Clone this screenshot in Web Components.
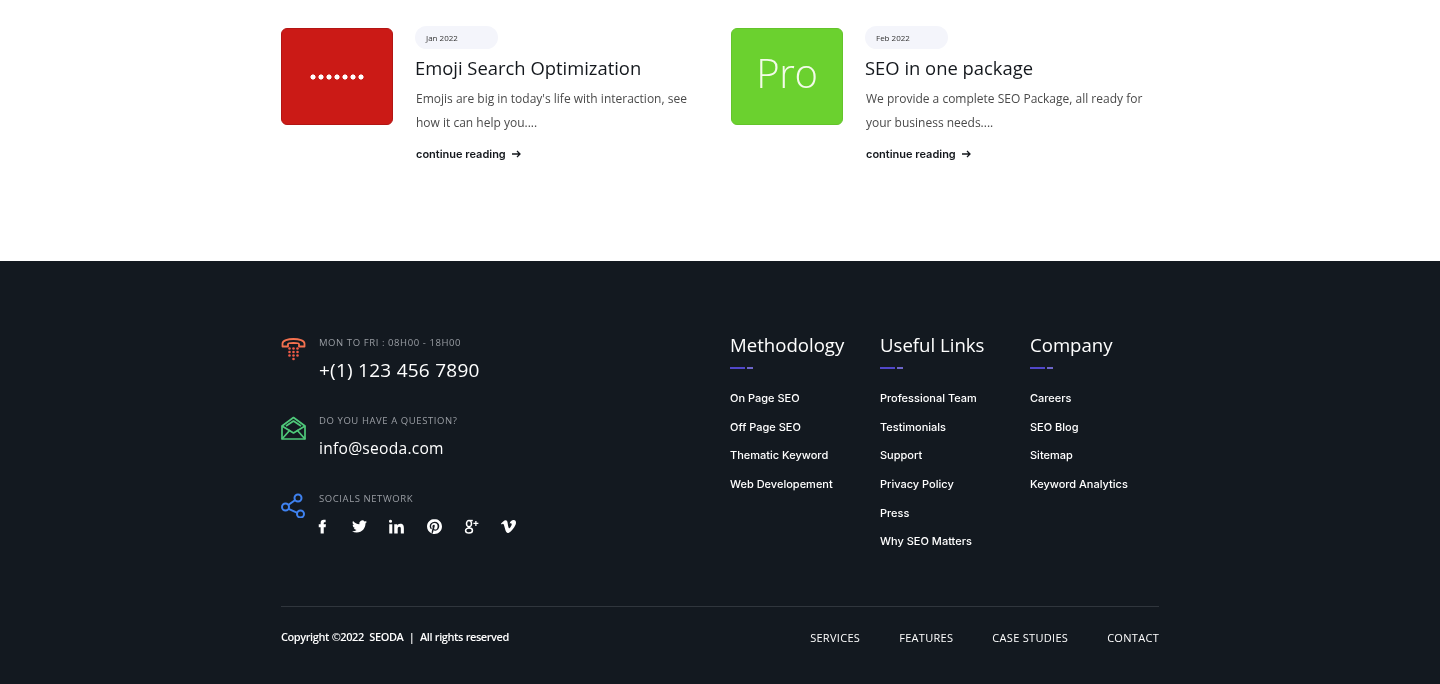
<!DOCTYPE html>
<html lang="en"><head><meta charset="utf-8"><title>SEODA</title>
<style>
html,body{margin:0;padding:0;background:#fff;font-family:"Open Sans",sans-serif;}
</style></head><body>
<blog-section>
  <blog-card date="Jan 2022" heading="Emoji Search Optimization" color="#cb1a16" edge="#b31513">
    <dot-row slot="media"></dot-row>
    Emojis are big in today's life with interaction, see how it can help you....
  </blog-card>
  <blog-card date="Feb 2022" heading="SEO in one package" color="#6bd12f" edge="#64c42b">
    <span slot="media" style="font:300 40px/1 'Open Sans',sans-serif;color:#f3fbe9;letter-spacing:-.3px;padding-bottom:7px">Pro</span>
    We provide a complete SEO Package, all ready for your business needs....
  </blog-card>
</blog-section>
<site-footer>
  <contact-item slot="contact" label="MON TO FRI : 08H00 - 18H00" value="+(1) 123 456 7890" size="19">
    <svg slot="icon" width="25" height="25" viewBox="0 0 25 25" fill="none"><path d="M1.500 9.500V6.500C1.500 .5 23.500 .5 23.500 6.500V9.500H18V7C18 5.500 7 5.500 7 7V9.500Z" stroke="#f4714f" stroke-width="1.800" stroke-linejoin="round"/><g fill="#ef5a47"><circle cx="8.500" cy="11.500" r="1.300"/><circle cx="12.500" cy="11.500" r="1.300"/><circle cx="16.500" cy="11.500" r="1.300"/><circle cx="8.500" cy="15" r="1.300"/><circle cx="12.500" cy="15" r="1.300"/><circle cx="16.500" cy="15" r="1.300"/><circle cx="8.500" cy="18.500" r="1.300"/><circle cx="12.500" cy="18.500" r="1.300"/><circle cx="16.500" cy="18.500" r="1.300"/><circle cx="12.500" cy="22" r="1.300"/></g></svg>
  </contact-item>
  <contact-item slot="contact" label="DO YOU HAVE A QUESTION?" value="info@seoda.com" size="15.600">
    <svg slot="icon" width="25" height="25" viewBox="0 0 25 25" fill="none" stroke="#4fc97a" stroke-width="1.700" stroke-linejoin="round"><path d="M1 11L12.500 2.500L24 11V24H1Z"/><path d="M1 11L12.500 18L24 11"/><path d="M5 11L12.500 6L20 11"/><path d="M1 24L9 15M24 24L16 15"/></svg>
  </contact-item>
  <contact-item slot="contact" label="SOCIALS NETWORK">
    <svg slot="icon" width="25" height="25" viewBox="0 0 25 25" fill="none" stroke="#3f82f0" stroke-width="2"><circle cx="17" cy="5" r="3.500"/><circle cx="4.500" cy="14" r="3.500"/><circle cx="19.500" cy="21" r="3.500"/><path d="M14.200 7L7.300 12M7.500 15.800L16.400 19.800"/></svg>
    <social-row slot="extra"></social-row>
  </contact-item>
  <link-col slot="cols" heading="Methodology" links="On Page SEO|Off Page SEO|Thematic Keyword|Web Developement"></link-col>
  <link-col slot="cols" heading="Useful Links" links="Professional Team|Testimonials|Support|Privacy Policy|Press|Why SEO Matters"></link-col>
  <link-col slot="cols" heading="Company" links="Careers|SEO Blog|Sitemap|Keyword Analytics"></link-col>
</site-footer>
<script>
const def=(name,css,html)=>customElements.define(name,class extends HTMLElement{
  connectedCallback(){
    if(this.shadowRoot)return;
    const r=this.attachShadow({mode:'open'});
    r.innerHTML='<style>'+css+'</style>'+(typeof html==='function'?html(this):html);
  }
});
def('blog-section',`:host{display:block;height:261px;box-sizing:border-box;background:#fff;}
.w{width:878px;margin:0 auto;padding-top:26px;display:grid;grid-template-columns:450px 428px;filter:blur(.3px);}`,
`<div class="w"><slot></slot></div>`);
def('blog-card',`:host{display:flex;gap:22px;align-items:flex-start;}
.m{width:112px;height:97px;box-sizing:border-box;margin-top:2px;border-radius:6px;display:flex;align-items:center;justify-content:center;flex:none;}
.b{flex:1;min-width:0;}
.d{display:inline-flex;align-items:center;height:23px;width:83px;box-sizing:border-box;padding-left:11px;border-radius:12px;background:#f4f5fb;font:400 8px/1 "Open Sans",sans-serif;color:#333;vertical-align:top;}
h3{margin:6px 0 0;font:400 18.400px/26px "Open Sans",sans-serif;color:#14181d;white-space:nowrap;}
p{margin:6px 0 0 1px;font:400 12px/24px "Open Sans",sans-serif;color:#4a4a4a;width:280px;}
a{display:flex;align-items:center;gap:6px;margin:11px 0 0 1px;font:600 11px/16px "Inter",sans-serif;color:#14181d;text-decoration:none;}`,
h=>`<div class="m" style="background:${h.getAttribute('color')};border:1px solid ${h.getAttribute('edge')}"><slot name="media"></slot></div>
<div class="b"><span class="d">${h.getAttribute('date')}</span><h3>${h.getAttribute('heading')}</h3><p><slot></slot></p>
<a href="#">continue reading <svg width="9" height="8" viewBox="0 0 9 8" fill="none" stroke="#14181d" stroke-width="1.300"><path d="M0 4H8M5 1L8 4L5 7"/></svg></a></div>`);
def('dot-row',`:host{display:block;width:56px;height:6px;background:radial-gradient(circle at 4px 3px,#fff 2.300px,transparent 2.800px) 0 0/8px 6px repeat-x;}`,``);
def('site-footer',`:host{display:block;height:423px;box-sizing:border-box;background:#131920;color:#fff;}
.w{width:878px;margin:0 auto;padding-top:72px;filter:blur(.3px);}
.top{display:flex;justify-content:space-between;height:273.600px;box-sizing:border-box;border-bottom:1px solid #30363d;}
.l{display:flex;flex-direction:column;gap:30px;padding-top:4px;}
.r{display:grid;grid-template-columns:150px 150px 129px;}
.bot{display:flex;justify-content:space-between;align-items:center;height:61px;}
.c{font:600 11px/16px "Open Sans",sans-serif;color:#fff;letter-spacing:-.42px;word-spacing:.3px;white-space:pre;}
nav{display:flex;gap:39px;margin-top:2px;}
nav a{font:400 11px/16px "Open Sans",sans-serif;color:#fff;text-decoration:none;letter-spacing:.3px;}`,
`<div class="w"><div class="top"><div class="l"><slot name="contact"></slot></div><div class="r"><slot name="cols"></slot></div></div>
<div class="bot"><span class="c">Copyright ©2022  SEODA  |  All rights reserved</span><nav><a href="#">SERVICES</a><a href="#">FEATURES</a><a href="#">CASE STUDIES</a><a href="#">CONTACT</a></nav></div></div>`);
def('contact-item',`:host{display:flex;gap:13px;height:48px;}
.i{width:25px;height:25px;flex:none;}
.i ::slotted(svg){display:block;}
.lb{font:400 9.500px/12px "Open Sans",sans-serif;color:#9a9ea4;letter-spacing:.58px;white-space:nowrap;}
.v{margin-top:7px;font-family:"Open Sans",sans-serif;font-weight:400;line-height:28px;color:#fff;letter-spacing:.25px;white-space:nowrap;}`,
h=>`<div class="i"><slot name="icon"></slot></div><div><div class="lb">${h.getAttribute('label')}</div>${h.getAttribute('value')?`<div class="v" style="font-size:${h.getAttribute('size')}px">${h.getAttribute('value')}</div>`:''}<slot name="extra"></slot></div>`);
const socials=[
'<path d="M14 8.500V6.300c0-1 .5-1.300 1.200-1.300H17V1h-3c-3.300 0-5 2-5 4.800v2.700H6V13h3v10h5V13h3l.5-4.500z"/>',
'<path d="M23.953 4.570a10 10 0 01-2.825.775 4.958 4.958 0 002.163-2.723c-.951.555-2.005.959-3.127 1.184a4.920 4.920 0 00-8.384 4.482C7.690 8.095 4.067 6.130 1.640 3.162a4.822 4.822 0 00-.666 2.475c0 1.710.870 3.213 2.188 4.096a4.904 4.904 0 01-2.228-.616v.060a4.923 4.923 0 003.946 4.827 4.996 4.996 0 01-2.212.085 4.936 4.936 0 004.604 3.417 9.867 9.867 0 01-6.102 2.105c-.390 0-.779-.023-1.170-.067a13.995 13.995 0 007.557 2.209c9.053 0 13.998-7.496 13.998-13.985 0-.210 0-.420-.015-.630A9.935 9.935 0 0024 4.590z"/>',
'<path d="M4.980 3.500a2.500 2.500 0 11-5 0 2.500 2.500 0 015 0zM.4 8.200h4.900V23H.4zM8.400 8.200h4.700v2h.1c.7-1.200 2.300-2.500 4.700-2.500 5 0 5.900 3.300 5.900 7.500V23h-4.900v-6.900c0-1.700 0-3.800-2.300-3.800s-2.700 1.800-2.700 3.700V23H8.400z"/>',
'<path d="M12.017 0C5.396 0 .029 5.367.029 11.987c0 5.079 3.158 9.417 7.618 11.162-.105-.949-.199-2.403.041-3.439.219-.937 1.406-5.957 1.406-5.957s-.359-.72-.359-1.781c0-1.663.967-2.911 2.168-2.911 1.024 0 1.518.769 1.518 1.688 0 1.029-.653 2.567-.992 3.992-.285 1.193.6 2.165 1.775 2.165 2.128 0 3.768-2.245 3.768-5.487 0-2.861-2.063-4.869-5.008-4.869-3.410 0-5.409 2.562-5.409 5.199 0 1.033.394 2.143.889 2.741.099.12.112.225.085.345-.09.375-.293 1.199-.334 1.363-.053.225-.172.271-.401.165-1.495-.69-2.433-2.878-2.433-4.646 0-3.776 2.748-7.252 7.920-7.252 4.158 0 7.392 2.967 7.392 6.923 0 4.135-2.607 7.462-6.233 7.462-1.214 0-2.354-.629-2.758-1.379l-.749 2.848c-.269 1.045-1.004 2.352-1.498 3.146 1.123.345 2.306.535 3.550.535 6.607 0 11.985-5.365 11.985-11.987C23.970 5.390 18.592.026 11.985.026L12.017 0z"/>',
'<g fill="none" stroke="#fff" stroke-width="2.400"><ellipse cx="8" cy="7.500" rx="4" ry="5"/><ellipse cx="8" cy="18.500" rx="5.500" ry="4"/><path d="M7 12.500L9 14.500"/><path d="M9 2.500H14"/></g><path d="M18 3h2v3h3v2h-3v3h-2V8h-3V6h3z"/>',
'<path d="M23.977 6.416c-.105 2.338-1.739 5.543-4.894 9.609-3.268 4.247-6.026 6.370-8.290 6.370-1.409 0-2.578-1.294-3.553-3.881L5.322 11.400C4.603 8.816 3.834 7.522 3.010 7.522c-.179 0-.806.378-1.881 1.132L0 7.197a315.065 315.065 0 003.501-3.128C5.080 2.701 6.266 1.984 7.055 1.910c1.867-.18 3.016 1.100 3.447 3.838.465 2.953.789 4.789.971 5.507.539 2.450 1.131 3.674 1.776 3.674.502 0 1.256-.796 2.265-2.385 1.004-1.589 1.540-2.797 1.612-3.628.144-1.371-.395-2.061-1.614-2.061-.574 0-1.167.121-1.777.391 1.186-3.868 3.434-5.757 6.762-5.637 2.473.060 3.628 1.664 3.493 4.797l-.013.010z"/>'];
def('social-row',`:host{display:flex;gap:22.200px;margin:14px 0 0 -4px;}
svg{display:block;width:15px;height:15px;fill:#fff;}`,
socials.map(p=>`<svg viewBox="0 0 24 24">${p}</svg>`).join(''));
def('link-col',`:host{display:block;}
h4{margin:0;font:400 18.600px/24px "Open Sans",sans-serif;color:#fff;white-space:nowrap;}
.dash{display:flex;gap:2px;margin-top:10px;height:2px;}
.dash i{display:block;height:2px;background:#5147c9;}
.dash i:first-child{width:15px}.dash i:last-child{width:6px;background:#6d66c9}
ul{list-style:none;margin:15px 0 0;padding:0;}
li{height:28.600px;display:flex;align-items:center;font:500 11px/16px "Inter",sans-serif;color:#fff;white-space:nowrap;}`,
h=>`<h4>${h.getAttribute('heading')}</h4><div class="dash"><i></i><i></i></div><ul>${h.getAttribute('links').split('|').map(l=>`<li>${l}</li>`).join('')}</ul>`);
</script>
</body></html>
